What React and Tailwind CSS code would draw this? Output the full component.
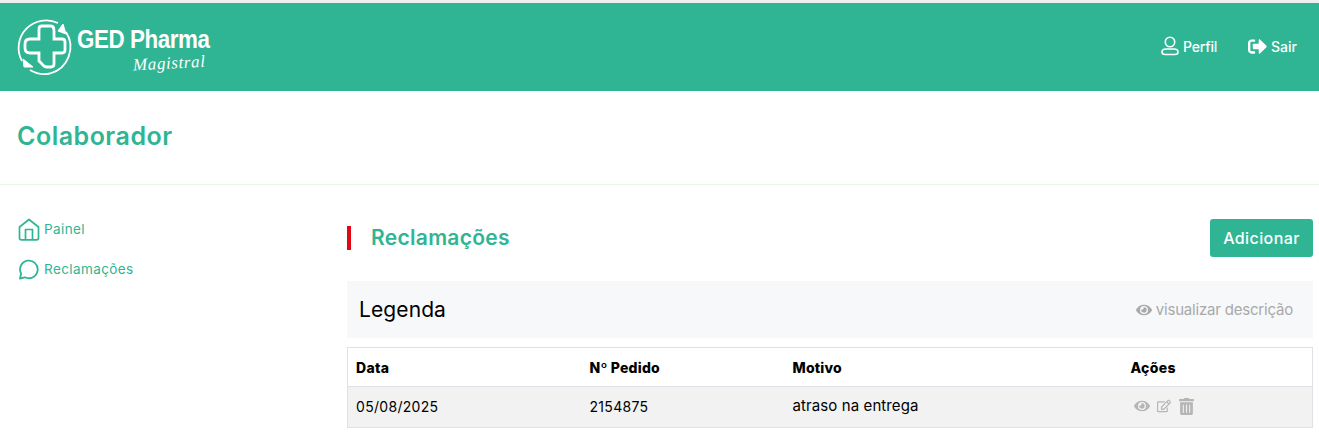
import React from "react";
import { FaEye, FaRegEdit, FaTrashAlt, FaSignOutAlt } from "react-icons/fa";

const Logo = () => (
  <div className="flex items-center">
    <svg width="60" height="60" viewBox="0 0 60 60" fill="none" stroke="white">
      <path d="M51 15 A27.500 27.500 0 0 1 35 56.500 A27.500 27.500 0 0 1 15 53" strokeWidth="1.800" />
      <path d="M7 44 A27.500 27.500 0 0 1 43 6" strokeWidth="1.800" />
      <path d="M48 7 L51 17 L43 14 Z" fill="white" strokeWidth="1" />
      <path d="M8 42 L9 50 L18 50 Z" fill="white" strokeWidth="1" />
      <path
        d="M24 12 Q24 9 27 9 L36 9 Q39 9 39 14 L39 22 L47 22 Q50 22 50 25 L50 33 Q50 36 47 36 L39 36 L39 47 Q39 50 36 50 L32 50 Q29 50 27 47 L24 44 L24 36 L15 36 Q10 36 10 31 L10 27 Q10 22 15 22 L24 22 Z"
        strokeWidth="2.800"
      />
    </svg>
    <div className="mt-[6px] ml-[2px] flex flex-col text-white">
      <div className="origin-left scale-x-[0.86] font-['Liberation_Sans'] text-[26px] leading-[22px] font-bold tracking-[-0.5px] whitespace-nowrap">
        GED Pharma
      </div>
      <div className="mt-[3px] ml-[56px] -rotate-3 font-['Liberation_Serif'] text-[17px] leading-[19px] tracking-[0.6px] italic">
        Magistral
      </div>
    </div>
  </div>
);

const PersonIcon = () => (
  <svg width="18" height="20" viewBox="0 0 18 20" fill="none" stroke="white" strokeWidth="1.600">
    <circle cx="9" cy="6" r="4.700" />
    <path d="M5 13 L13 13 Q17 13 17 16 Q17 18.500 14 18.500 L4 18.500 Q1 18.500 1 16 Q1 13 5 13 Z" />
  </svg>
);

const HouseIcon = () => (
  <svg width="22" height="23" viewBox="0 0 22 23" fill="none" stroke="#2fb594" strokeWidth="1.700" strokeLinejoin="round">
    <path d="M1.500 9 L11 1.500 L20.500 9 L20.500 20 Q20.500 21.800 18.500 21.800 L3.500 21.800 Q1.500 21.800 1.500 20 Z" />
    <path d="M7.500 21.800 L7.500 11.500 L14.500 11.500 L14.500 21.800" />
  </svg>
);

const ChatIcon = () => (
  <svg width="22" height="21" viewBox="0 0 22 21" fill="none" stroke="#2fb594" strokeWidth="1.800" strokeLinejoin="round">
    <path d="M2 19.500 L3.100 14.500 A8.800 8.800 0 1 1 7 18.300 Z" />
  </svg>
);

const SideLink = ({ icon, label }) => (
  <div className="flex h-[40px] items-center gap-[4px] text-[#2fb594]">
    {icon}
    <span className="text-[13.5px] tracking-[0.4px]">{label}</span>
  </div>
);

const App = () => {
  return (
    <div className="h-[439px] overflow-hidden bg-white font-['Inter',sans-serif]">
      <div className="h-[3px] bg-[#eeeeee]" />
      <header className="flex h-[88px] items-center justify-between bg-[#2fb594] pr-[22px] pl-[15px] text-white">
        <Logo />
        <nav className="mb-[2px] flex items-center gap-[31px] text-[14px] font-medium">
          <div className="flex items-center gap-[4px]">
            <PersonIcon />
            <span className="tracking-[-0.2px]">Perfil</span>
          </div>
          <div className="flex items-center gap-[4px]">
            <FaSignOutAlt size={19} />
            <span>Sair</span>
          </div>
        </nav>
      </header>

      <div className="flex h-[94px] items-center border-b border-[#e4f8ea] pb-[2px] pl-[17px]">
        <h1 className="text-[25px] font-semibold tracking-[0.5px] text-[#2fb594]">Colaborador</h1>
      </div>

      <div className="flex pr-[6px]">
        <aside className="w-[347px] shrink-0 pt-[24px] pl-[18px]">
          <SideLink icon={<HouseIcon />} label="Painel" />
          <SideLink icon={<ChatIcon />} label="Reclamações" />
        </aside>

        <main className="flex-1 pt-[34px]">
          <div className="flex h-[38px] items-center justify-between">
            <h2 className="flex h-[24px] items-center border-l-4 border-[#e30613] pl-[20px] text-[21px] font-semibold tracking-[0.3px] text-[#2fb594]">
              Reclamações
            </h2>
            <button className="h-[38px] w-[103px] rounded-[3px] bg-[#2fb594] text-[16px] font-medium tracking-[0.4px] text-white">
              Adicionar
            </button>
          </div>

          <div className="mt-[24px] flex h-[57px] items-center justify-between bg-[#f7f8fa] pr-[20px] pl-[12px]">
            <span className="text-[21px] tracking-[0.1px] text-black">Legenda</span>
            <span className="mt-[1px] flex items-center gap-[4px] text-[15px] tracking-[-0.2px] text-[#a9a9a9]">
              <FaEye size={16} />
              visualizar descrição
            </span>
          </div>

          <table className="mt-[9px] w-full table-fixed border-collapse border border-[#dee2e6] text-[14px] text-black">
            <thead>
              <tr className="h-[39px] border-b border-[#dee2e6] text-left">
                <th className="w-[234px] pl-[8px] font-extrabold tracking-[0.3px]">Data</th>
                <th className="w-[202px] pl-[8px] font-extrabold tracking-[0.2px]">Nº Pedido</th>
                <th className="w-[339px] pl-[9px] font-extrabold tracking-[0.2px]">Motivo</th>
                <th className="pl-[8px] font-extrabold tracking-[0.3px]">Ações</th>
              </tr>
            </thead>
            <tbody>
              <tr className="h-[41px] bg-[#f2f2f2]">
                <td className="pb-[2px] pl-[8px] tracking-[0.3px]">05/08/2025</td>
                <td className="pb-[2px] pl-[8px] tracking-[0.3px]">2154875</td>
                <td className="pb-[2px] pl-[9px] text-[15px] tracking-[0.1px]">atraso na entrega</td>
                <td className="pb-[2px] pl-[11px]">
                  <div className="flex items-center gap-[7px] text-[#b5b5b5]">
                    <FaEye size={16} />
                    <FaRegEdit size={14} />
                    <FaTrashAlt size={17} />
                  </div>
                </td>
              </tr>
            </tbody>
          </table>
        </main>
      </div>
    </div>
  );
};

export default App;
